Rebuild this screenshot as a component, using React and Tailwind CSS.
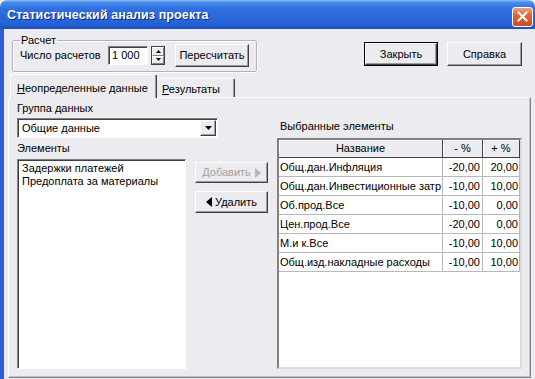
export default function App() {
  const raised =
    "border border-t-white border-l-white border-r-[#404040] border-b-[#404040] shadow-[inset_-1px_-1px_0_#9d9da1] bg-[#ecebef]";
  const sunken =
    "border border-t-[#808080] border-l-[#808080] border-r-white border-b-white shadow-[inset_1px_1px_0_#404040]";
  const rows = [
    ["Общ.дан.Инфляция", "-20,00", "20,00"],
    ["Общ.дан.Инвестиционные затр", "-10,00", "10,00"],
    ["Об.прод.Все", "-10,00", "0,00"],
    ["Цен.прод.Все", "-20,00", "0,00"],
    ["М.и к.Все", "-10,00", "10,00"],
    ["Общ.изд.накладные расходы", "-10,00", "10,00"],
  ];
  return (
    <div className="w-[535px] h-[379px] overflow-hidden flex flex-col bg-[#ecebef] text-black text-[11px] leading-[13px] font-['Liberation_Sans',Arial,sans-serif]">
      {/* Title bar */}
      <div className="h-[29px] shrink-0 flex items-center pl-[7px] pr-[2px] rounded-t-[7px] bg-[linear-gradient(to_bottom,#8fc0f6_0%,#4a8cec_8%,#2e70df_30%,#2a67da_60%,#2561d4_85%,#1b4fc0_100%)]">
        <span className="text-white font-bold text-[12.5px] leading-[16px] tracking-[0.1px] [text-shadow:1px_1px_0_#0a2a80] font-['Liberation_Sans_Narrow','Liberation_Sans',sans-serif]">
          Статистический анализ проекта
        </span>
        <div className="ml-auto mt-[4px] w-[21px] h-[20px] rounded-[3px] border border-white flex items-center justify-center bg-[linear-gradient(to_bottom,#f0a07c_0%,#e2633a_40%,#cf4a20_100%)]">
          <svg width="11" height="11" viewBox="0 0 11 11">
            <path d="M1.5 1.5 L9.5 9.5 M9.5 1.5 L1.5 9.5" stroke="white" strokeWidth="2" strokeLinecap="square" />
          </svg>
        </div>
      </div>

      {/* Body */}
      <div className="flex-1 flex flex-col border-l-[4px] border-l-[#2c5fd2]">
        {/* Top section */}
        <div className="h-[45px] shrink-0 flex items-start">
          <fieldset className="ml-[8px] mt-[5px] w-[245px] border border-[#b4b3b8] rounded-[2px] px-[7px] pb-[4px] shadow-[inset_1px_1px_0_#fff,1px_1px_0_#fff]">
            <legend className="px-[1px] leading-[12px]">Расчет</legend>
            <div className="-mt-[2px] h-[23px] flex items-center">
              <span className="w-[88px] shrink-0">Число расчетов</span>
              <div className={`w-[40px] h-[19px] bg-white pl-[3px] flex items-center ${sunken}`}>1 000</div>
              <div className="ml-[3px] w-[14px] h-[19px] flex flex-col border border-[#404040] bg-[#ecebef]">
                <div className="flex-1 flex items-center justify-center border border-t-white border-l-white border-r-[#808080] border-b-[#808080]">
                  <svg width="5" height="3" viewBox="0 0 5 3"><path d="M2.5 0 L5 3 L0 3 Z" fill="black" /></svg>
                </div>
                <div className="flex-1 flex items-center justify-center border border-t-white border-l-white border-r-[#808080] border-b-[#808080]">
                  <svg width="5" height="3" viewBox="0 0 5 3"><path d="M0 0 L5 0 L2.5 3 Z" fill="black" /></svg>
                </div>
              </div>
              <div className={`ml-[10px] w-[74px] h-[23px] flex items-center justify-center ${raised}`}>Пересчитать</div>
            </div>
          </fieldset>
          <div className="ml-auto mt-[13px] mr-[13px] flex gap-[9px]">
            <div className="w-[74px] h-[24px] border border-black">
              <div className={`w-full h-full flex items-center justify-center ${raised}`}>Закрыть</div>
            </div>
            <div className={`w-[75px] h-[24px] flex items-center justify-center ${raised}`}>Справка</div>
          </div>
        </div>

        {/* Tabs */}
        <div className="h-[23px] shrink-0 flex items-end pl-[6px]">
          <div className="relative z-10 -mb-[1px] w-[147px] h-[24px] pt-[7px] pl-[6px] bg-[#ecebef] border-t border-l border-t-white border-l-white border-r border-r-[#404040] shadow-[inset_-1px_0_0_#9d9da1] rounded-t-[2px]">
            <span className="underline underline-offset-[1px]">Н</span>еопределенные данные
          </div>
          <div className="w-[78px] h-[19px] pt-[4px] pl-[5px] border-t border-t-white border-r border-r-[#404040] shadow-[inset_-1px_0_0_#9d9da1] rounded-t-[2px]">
            <span className="underline underline-offset-[1px]">Р</span>езультаты
          </div>
        </div>

        {/* Panel */}
        <div className="ml-[4px] w-[523px] h-[281px] flex border border-t-white border-l-white border-r-[#808080] border-b-[#808080] shadow-[inset_-1px_-1px_0_#c4c3c8]">
          {/* Left part */}
          <div className="pl-[8px] pt-[4px] pb-[8px] w-[259px] shrink-0 flex flex-col">
            <div>Группа данных</div>
            <div className={`mt-[3px] w-[201px] h-[20px] bg-white flex items-center ${sunken}`}>
              <span className="pl-[4px] flex-1">Общие данные</span>
              <div className="mr-[1px] w-[16px] h-[16px] flex items-center justify-center border border-t-white border-l-white border-r-[#404040] border-b-[#404040] shadow-[inset_-1px_-1px_0_#9d9da1] bg-[#ecebef]">
                <svg width="7" height="4" viewBox="0 0 7 4"><path d="M0 0 L7 0 L3.5 4 Z" fill="black" /></svg>
              </div>
            </div>
            <div className="mt-[4px]">Элементы</div>
            <div className="mt-[4px] flex-1 flex">
              <div className={`w-[169px] h-full bg-white pl-[4px] pt-[2px] ${sunken}`}>
                <div>Задержки платежей</div>
                <div>Предоплата за материалы</div>
              </div>
              <div className="ml-[9px] w-[73px] flex flex-col">
                <div className={`mt-[3px] h-[21px] flex items-center justify-center gap-[4px] text-[#a3a2a7] ${raised}`}>
                  <span>Добавить</span>
                  <svg width="6" height="10" viewBox="0 0 6 10"><path d="M0 0 L6 5 L0 10 Z" fill="#b5b4b9" /></svg>
                </div>
                <div className={`mt-[8px] h-[22px] flex items-center justify-center gap-[3px] ${raised}`}>
                  <svg width="6" height="10" viewBox="0 0 6 10"><path d="M6 0 L0 5 L6 10 Z" fill="black" /></svg>
                  <span>Удалить</span>
                </div>
              </div>
            </div>
          </div>
          {/* Right part */}
          <div className="ml-[9px] w-[245px] shrink-0 pt-[22px] pb-[8px] flex flex-col">
            <div className="pl-[3px]">Выбранные элементы</div>
            <div className="mt-[5px] flex-1 bg-white border-2 border-t-[#808080] border-l-[#808080] border-r-[#dcdbe0] border-b-[#dcdbe0]">
              <div className="flex h-[18px]">
                <div className="w-[164px] flex items-center justify-center bg-[#ecebef] border-r border-b border-[#404040] shadow-[inset_1px_1px_0_#fff]">Название</div>
                <div className="w-[40px] flex items-center justify-center bg-[#ecebef] border-r border-b border-[#404040] shadow-[inset_1px_1px_0_#fff]">- %</div>
                <div className="w-[37px] flex items-center justify-center bg-[#ecebef] border-r border-b border-[#404040] shadow-[inset_1px_1px_0_#fff]">+ %</div>
              </div>
              {rows.map((r, i) => (
                <div key={i} className="flex h-[19px]">
                  <div className="w-[164px] flex items-center pl-[1px] border-r border-b border-[#b8b8bc] whitespace-nowrap overflow-hidden">{r[0]}</div>
                  <div className="w-[40px] flex items-center justify-end pr-[2px] border-r border-b border-[#b8b8bc]">{r[1]}</div>
                  <div className="w-[37px] flex items-center justify-end pr-[1px] border-r border-b border-[#b8b8bc]">{r[2]}</div>
                </div>
              ))}
            </div>
          </div>
        </div>
      </div>
    </div>
  );
}
